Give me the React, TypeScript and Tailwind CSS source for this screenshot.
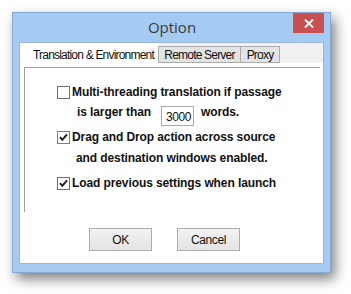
import React from 'react';

const font = "font-['Liberation_Sans',Arial,sans-serif]";

const CheckBox: React.FC<{ checked?: boolean; focused?: boolean }> = ({ checked, focused }) => (
  <span
    className={`w-[13px] h-[13px] shrink-0 border bg-white flex items-center justify-center ${
      focused ? 'border-[#3c8ad8]' : 'border-[#707070]'
    }`}
  >
    {checked && (
      <svg width="11" height="11" viewBox="0 0 11 11">
        <path d="M2 5.2 L4.3 7.8 L9 2.4" fill="none" stroke="#1e1e1e" strokeWidth="2" />
      </svg>
    )}
  </span>
);

const Tab: React.FC<{ label: string; width: string }> = ({ label, width }) => (
  <div
    className={`${width} h-[17px] shrink-0 self-end border border-[#acacac] bg-[#e3e3e3] -ml-px flex items-center justify-center whitespace-nowrap text-[12px] tracking-[-0.8px] text-[#111]`}
  >
    {label}
  </div>
);

const Button: React.FC<{ label: string }> = ({ label }) => (
  <button className="w-[63px] h-[23px] border border-[#acacac] bg-gradient-to-b from-[#f2f2f2] to-[#e4e4e4] text-[12px] tracking-[-0.4px] text-[#111] flex items-center justify-center">
    {label}
  </button>
);

export default function App() {
  return (
    <div className={`w-[351px] h-[294px] bg-white pt-[12px] pl-[12px] ${font}`}>
      <div className="w-[319px] h-[261px] border border-[#87a9cf] bg-[#a5cbf3] flex flex-col shadow-[4px_6px_12px_rgba(0,0,0,0.5)]">
        {/* title bar */}
        <div className="h-[29px] flex items-start">
          <div className="w-[38px]" />
          <div className="flex-1 h-[29px] flex items-center justify-center text-[15px] text-[#3a3a3a] font-['Open_Sans',sans-serif]">
            Option
          </div>
          <div className="w-[31px] h-[20px] bg-[#c75050] flex items-center justify-center">
            <svg width="10" height="9" viewBox="0 0 10 9">
              <path d="M1 0.5 L9 8.5 M9 0.5 L1 8.5" stroke="#fff" strokeWidth="1.8" />
            </svg>
          </div>
          <div className="w-[6px]" />
        </div>

        {/* client */}
        <div className="mx-[6px] h-[222px] border border-[#9bb6d6] bg-white flex flex-col">
          {/* tab strip */}
          <div className="h-[20px] bg-[#f0f0f0] flex">
            <div className="w-[139px] shrink-0 h-[20px] bg-white flex items-start pl-[13px] pt-[5px] whitespace-nowrap text-[12px] tracking-[-0.8px] text-[#111] leading-[14px]">
              Translation &amp; Environment
            </div>
            <Tab label="Remote Server" width="w-[83px]" />
            <Tab label="Proxy" width="w-[40px]" />
          </div>

          {/* tab page */}
          <div className="ml-[4px] mt-[4px] w-[296px] h-[145px] border-t border-l border-[#a0a0a0] pl-[32px] pt-[17px] flex flex-col text-[12px] font-bold tracking-[-0.1px] text-[#111] leading-[14px] whitespace-nowrap">
            <div className="h-[14px] flex items-center gap-[2px]">
              <CheckBox />
              <span>Multi-threading translation if passage</span>
            </div>
            <div className="mt-[6px] h-[21px] flex items-start pl-[20px]">
              <span>is larger than</span>
              <div className="ml-[10px] mt-[1px] w-[33px] h-[20px] border border-[#a8a8a8] flex items-start pt-[3px] pl-[4px] font-normal tracking-[-0.4px]">
                3000
              </div>
              <span className="ml-[7px]">words.</span>
            </div>
            <div className="mt-[4px] h-[14px] flex items-center gap-[2px]">
              <CheckBox checked focused />
              <span>Drag and Drop action across source</span>
            </div>
            <div className="mt-[7px] h-[14px] pl-[19px]">and destination windows enabled.</div>
            <div className="mt-[11px] h-[14px] flex items-center gap-[2px]">
              <CheckBox checked />
              <span>Load previous settings when launch</span>
            </div>
          </div>

          {/* buttons */}
          <div className="mt-[16px] pl-[69px] flex gap-[25px]">
            <Button label="OK" />
            <Button label="Cancel" />
          </div>
        </div>
      </div>
    </div>
  );
}
